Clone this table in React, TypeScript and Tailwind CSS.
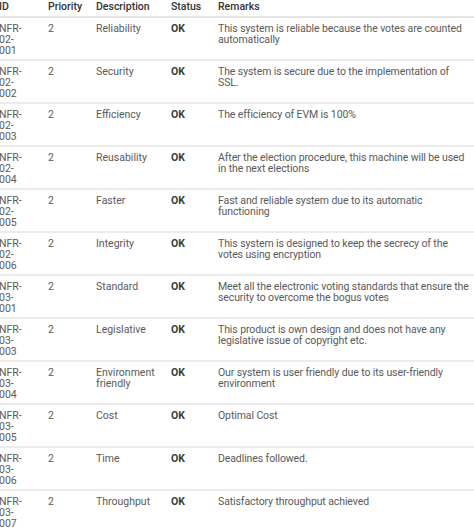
const rows = [
  { id: ['NFR-', '02-', '001'], desc: ['Reliability'], remark: ['This system is reliable because the votes are counted', 'automatically'] },
  { id: ['NFR-', '02-', '002'], desc: ['Security'], remark: ['The system is secure due to the implementation of', 'SSL.'] },
  { id: ['NFR-', '02-', '003'], desc: ['Efficiency'], remark: ['The efficiency of EVM is 100%'] },
  { id: ['NFR-', '02-', '004'], desc: ['Reusability'], remark: ['After the election procedure, this machine will be used', 'in the next elections'] },
  { id: ['NFR-', '02-', '005'], desc: ['Faster'], remark: ['Fast and reliable system due to its automatic', 'functioning'] },
  { id: ['NFR-', '02-', '006'], desc: ['Integrity'], remark: ['This system is designed to keep the secrecy of the', 'votes using encryption'] },
  { id: ['NFR-', '03-', '001'], desc: ['Standard'], remark: ['Meet all the electronic voting standards that ensure the', 'security to overcome the bogus votes'] },
  { id: ['NFR-', '03-', '003'], desc: ['Legislative'], remark: ['This product is own design and does not have any', 'legislative issue of copyright etc.'] },
  { id: ['NFR-', '03-', '004'], desc: ['Environment', 'friendly'], remark: ['Our system is user friendly due to its user-friendly', 'environment'] },
  { id: ['NFR-', '03-', '005'], desc: ['Cost'], remark: ['Optimal Cost'] },
  { id: ['NFR-', '03-', '006'], desc: ['Time'], remark: ['Deadlines followed.'] },
  { id: ['NFR-', '03-', '007'], desc: ['Throughput'], remark: ['Satisfactory throughput achieved'] },
];

const cols = 'grid grid-cols-[48px_48px_75px_47px_1fr]';

function Lines({ lines }: { lines: string[] }) {
  return (
    <>
      {lines.map(l => (
        <div key={l} className="whitespace-nowrap">{l}</div>
      ))}
    </>
  );
}

export default function App() {
  return (
    <div className="w-[474px] h-[530px] overflow-hidden bg-white font-['Roboto',sans-serif] text-[10.5px] leading-[11px] text-[#5a5a5a]">
      <div className={`${cols} h-[18px] pt-[1px] border-b-2 border-[#e6e6e6] font-medium text-[#333]`}>
        <div className="-ml-[1px]">ID</div>
        <div>Priority</div>
        <div>Description</div>
        <div>Status</div>
        <div>Remarks</div>
      </div>
      {rows.map(r => (
        <div key={r.id.join('')} className={`${cols} h-[43px] pt-[5px] border-b-2 border-[#ececec]`}>
          <div className="-ml-[1px]">
            <Lines lines={r.id} />
          </div>
          <div>2</div>
          <div>
            <Lines lines={r.desc} />
          </div>
          <div className="font-bold text-[#3a3a3a]">OK</div>
          <div className="tracking-[-0.1px]">
            <Lines lines={r.remark} />
          </div>
        </div>
      ))}
    </div>
  );
}
